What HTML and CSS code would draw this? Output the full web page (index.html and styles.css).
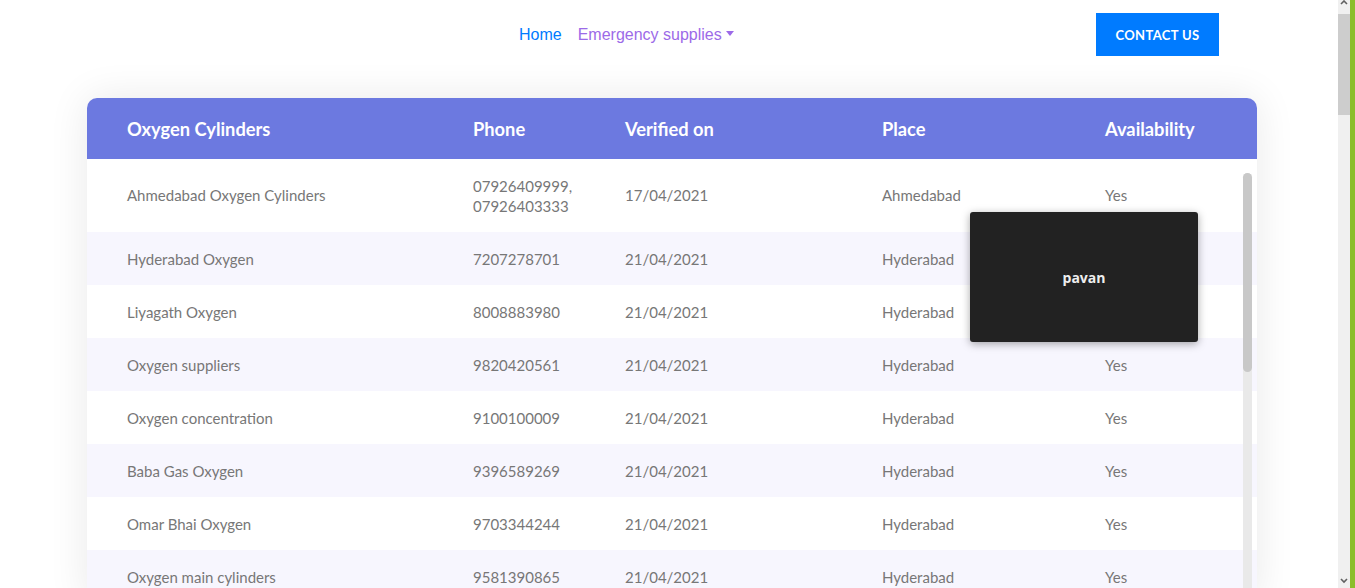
FILE: index.html
```html
<!DOCTYPE html>
<html>
<head>
<meta charset="utf-8">
<link rel="stylesheet" href="styles.css">
</head>
<body>
<div class="page">
  <div class="content">
    <header class="topbar">
      <nav class="nav">
        <a class="nav-link home" href="#">Home</a>
        <a class="nav-link dropdown" href="#">Emergency supplies<span class="caret"></span></a>
      </nav>
      <a class="btn-contact" href="#">CONTACT US</a>
    </header>
    <section class="card">
      <table class="grid">
        <colgroup>
          <col class="c1"><col class="c2"><col class="c3"><col class="c4"><col class="c5">
        </colgroup>
        <thead>
          <tr><th>Oxygen Cylinders</th><th>Phone</th><th>Verified on</th><th>Place</th><th>Availability</th></tr>
        </thead>
        <tbody>
          <tr class="tall"><td>Ahmedabad Oxygen Cylinders</td><td class="two">07926409999,<br>07926403333</td><td>17/04/2021</td><td>Ahmedabad</td><td>Yes</td></tr>
          <tr class="alt"><td>Hyderabad Oxygen</td><td>7207278701</td><td>21/04/2021</td><td>Hyderabad</td><td>Yes</td></tr>
          <tr><td>Liyagath Oxygen</td><td>8008883980</td><td>21/04/2021</td><td>Hyderabad</td><td>Yes</td></tr>
          <tr class="alt"><td>Oxygen suppliers</td><td>9820420561</td><td>21/04/2021</td><td>Hyderabad</td><td>Yes</td></tr>
          <tr><td>Oxygen concentration</td><td>9100100009</td><td>21/04/2021</td><td>Hyderabad</td><td>Yes</td></tr>
          <tr class="alt"><td>Baba Gas Oxygen</td><td>9396589269</td><td>21/04/2021</td><td>Hyderabad</td><td>Yes</td></tr>
          <tr><td>Omar Bhai Oxygen</td><td>9703344244</td><td>21/04/2021</td><td>Hyderabad</td><td>Yes</td></tr>
          <tr class="alt"><td>Oxygen main cylinders</td><td>9581390865</td><td>21/04/2021</td><td>Hyderabad</td><td>Yes</td></tr>
        </tbody>
      </table>
      <div class="inner-scroll"><div class="inner-thumb"></div></div>
      <div class="tooltip">pavan</div>
    </section>
  </div>
  <div class="sb">
    <div class="sb-btn"><svg width="12" height="14" viewBox="0 0 12 14"><path d="M3 4 L6 1 L9 4" fill="none" stroke="#606060" stroke-width="1.6"/></svg></div>
    <div class="sb-thumb"></div>
    <div class="sb-track"></div>
    <div class="sb-btn"><svg width="12" height="14" viewBox="0 0 12 14"><path d="M3 5 L6 8 L9 5" fill="none" stroke="#606060" stroke-width="1.6"/></svg></div>
  </div>
  <div class="edge"></div>
</div>
</body>
</html>
```

FILE: styles.css
```css
html, body {
  margin: 0;
  padding: 0;
  height: 100%;
  overflow: hidden;
  background: #fff;
}
.page {
  display: flex;
  height: 588px;
}
.content {
  flex: 1;
  min-width: 0;
  overflow: hidden;
}
.topbar {
  display: flex;
  align-items: center;
  height: 69px;
}
.nav {
  display: flex;
  margin-left: 511px;
  font-family: "Liberation Sans", Arial, sans-serif;
  font-size: 16px;
}
.nav-link {
  padding: 0 8px;
  text-decoration: none;
  line-height: 20px;
}
.home { color: #007bff; }
.dropdown { color: #9c6ae8; }
.caret {
  display: inline-block;
  margin-left: 4px;
  vertical-align: 4px;
  border-top: 5px solid #9c6ae8;
  border-left: 4px solid transparent;
  border-right: 4px solid transparent;
}
.btn-contact {
  margin-left: auto;
  margin-right: 119px;
  width: 123px;
  height: 43px;
  box-sizing: border-box;
  display: flex;
  align-items: center;
  justify-content: center;
  background: #007bff;
  color: #fff;
  text-decoration: none;
  font-family: Lato, "Open Sans", sans-serif;
  font-weight: 700;
  font-size: 13px;
  letter-spacing: 0.35px;
}
.card {
  position: relative;
  margin: 29px 0 0 87px;
  width: 1170px;
  border-radius: 10px 10px 0 0;
  background: #fff;
  box-shadow: 0 0 40px rgba(0, 0, 0, 0.09);
  font-family: Lato, "Open Sans", sans-serif;
}
.grid {
  width: 100%;
  border-collapse: collapse;
  table-layout: fixed;
}
.c1 { width: 386px; }
.c2 { width: 152px; }
.c3 { width: 257px; }
.c4 { width: 223px; }
.grid th {
  background: #6c79e0;
  color: #fff;
  font-weight: 700;
  font-size: 18.3px;
  text-align: left;
  height: 61px;
  padding: 0;
}
.grid th:first-child { border-top-left-radius: 10px; }
.grid th:last-child { border-top-right-radius: 10px; }
.grid th:first-child, .grid td:first-child { padding-left: 40px; }
.grid td {
  height: 53px;
  padding: 0;
  font-size: 15px;
  color: #777;
  line-height: 20px;
  vertical-align: middle;
}
.grid tr.tall td { height: 71px; padding-bottom: 2px; }
.grid tr.tall td.two { height: 73px; padding-bottom: 0; }
.grid tr.alt td { background: #f7f6fe; }
.inner-scroll {
  position: absolute;
  right: 5px;
  top: 75px;
  width: 9px;
  height: 520px;
  background: #e9e9e9;
  border-radius: 5px 5px 0 0;
}
.inner-thumb {
  height: 199px;
  background: #c8c8c8;
  border-radius: 5px;
}
.tooltip {
  position: absolute;
  left: 883px;
  top: 114px;
  width: 228px;
  height: 130px;
  display: flex;
  align-items: center;
  justify-content: center;
  background: #222;
  color: #eee;
  border-radius: 3px;
  box-shadow: 0 2px 8px rgba(0, 0, 0, 0.35);
  font-family: "Open Sans", sans-serif;
  font-weight: 700;
  font-size: 14px;
}
.sb {
  width: 12px;
  display: flex;
  flex-direction: column;
  background: #f0f0f0;
}
.sb-btn {
  height: 14px;
  display: flex;
  justify-content: center;
}
.sb-thumb {
  height: 101px;
  background: #cdcdcd;
}
.sb-track { flex: 1; }
.edge {
  width: 5px;
  background: #8bbe2a;
}
```
